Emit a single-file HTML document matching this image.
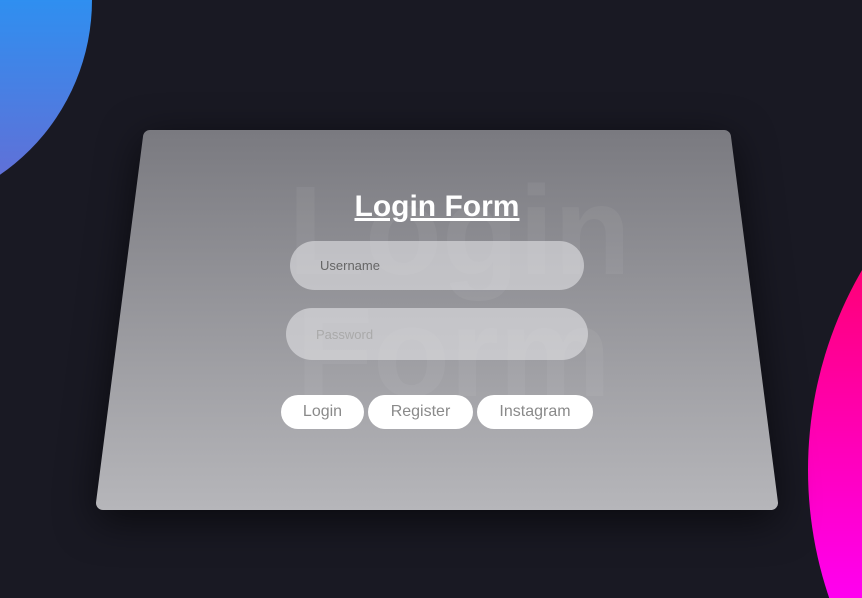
<!DOCTYPE html>
<html><head><meta charset="utf-8"><style>
html,body{margin:0;padding:0;width:862px;height:598px;overflow:hidden}
body{background:#191923;position:relative;font-family:"Liberation Sans",sans-serif}
svg.bg{position:absolute;left:0;top:0}
svg.card{position:absolute;left:0;top:0;filter:drop-shadow(0 10px 20px rgba(0,0,0,.6))}
.ghost{position:absolute;color:rgba(255,255,255,.05);font-weight:bold;font-size:126px;line-height:1}
.t{position:absolute;left:0;width:874px;text-align:center;top:190px;font-size:30px;font-weight:bold;color:#fff;text-decoration:underline}
.in{position:absolute;background:rgba(225,225,228,.62);border-radius:26px;font-size:13px}
.b{position:absolute;top:395px;height:34px;background:#fff;border-radius:17px;color:#8a8a8a;font-size:16px;text-align:center;line-height:34px}
</style></head><body>
<svg class="bg" width="862" height="598">
<defs>
<linearGradient id="b1" x1="0" y1="0" x2="0" y2="212" gradientUnits="userSpaceOnUse"><stop offset="0" stop-color="#2f8ff0"/><stop offset="1" stop-color="#6a6ad2"/></linearGradient>
<linearGradient id="p1" x1="0" y1="250" x2="0" y2="598" gradientUnits="userSpaceOnUse"><stop offset="0" stop-color="#ff0070"/><stop offset="1" stop-color="#ff00f0"/></linearGradient>
</defs>
<circle cx="-120" cy="0" r="212" fill="url(#b1)"/>
<circle cx="1205" cy="470" r="397" fill="url(#p1)"/>
</svg>
<svg class="card" width="862" height="598">
<defs><linearGradient id="g" x1="0" y1="130" x2="0" y2="510" gradientUnits="userSpaceOnUse"><stop offset="0" stop-color="#7a7a80"/><stop offset="1" stop-color="#b6b6ba"/></linearGradient></defs>
<path d="M150 137 L724 137 L771 503 L103 503 Z" fill="url(#g)" stroke="url(#g)" stroke-width="14" stroke-linejoin="round"/>
</svg>
<div class="ghost" style="left:288px;top:168px">Login</div>
<div class="ghost" style="left:296px;top:290px">Form</div>
<div class="t">Login Form</div>
<div class="in" style="left:290px;top:241px;width:294px;height:49px"><span style="position:absolute;left:30px;top:17px;color:#666">Username</span></div>
<div class="in" style="left:286px;top:308px;width:302px;height:52px"><span style="position:absolute;left:30px;top:19px;color:#aaa">Password</span></div>
<div class="b" style="left:281px;width:83px">Login</div>
<div class="b" style="left:368px;width:105px">Register</div>
<div class="b" style="left:477px;width:116px">Instagram</div>
</body></html>
